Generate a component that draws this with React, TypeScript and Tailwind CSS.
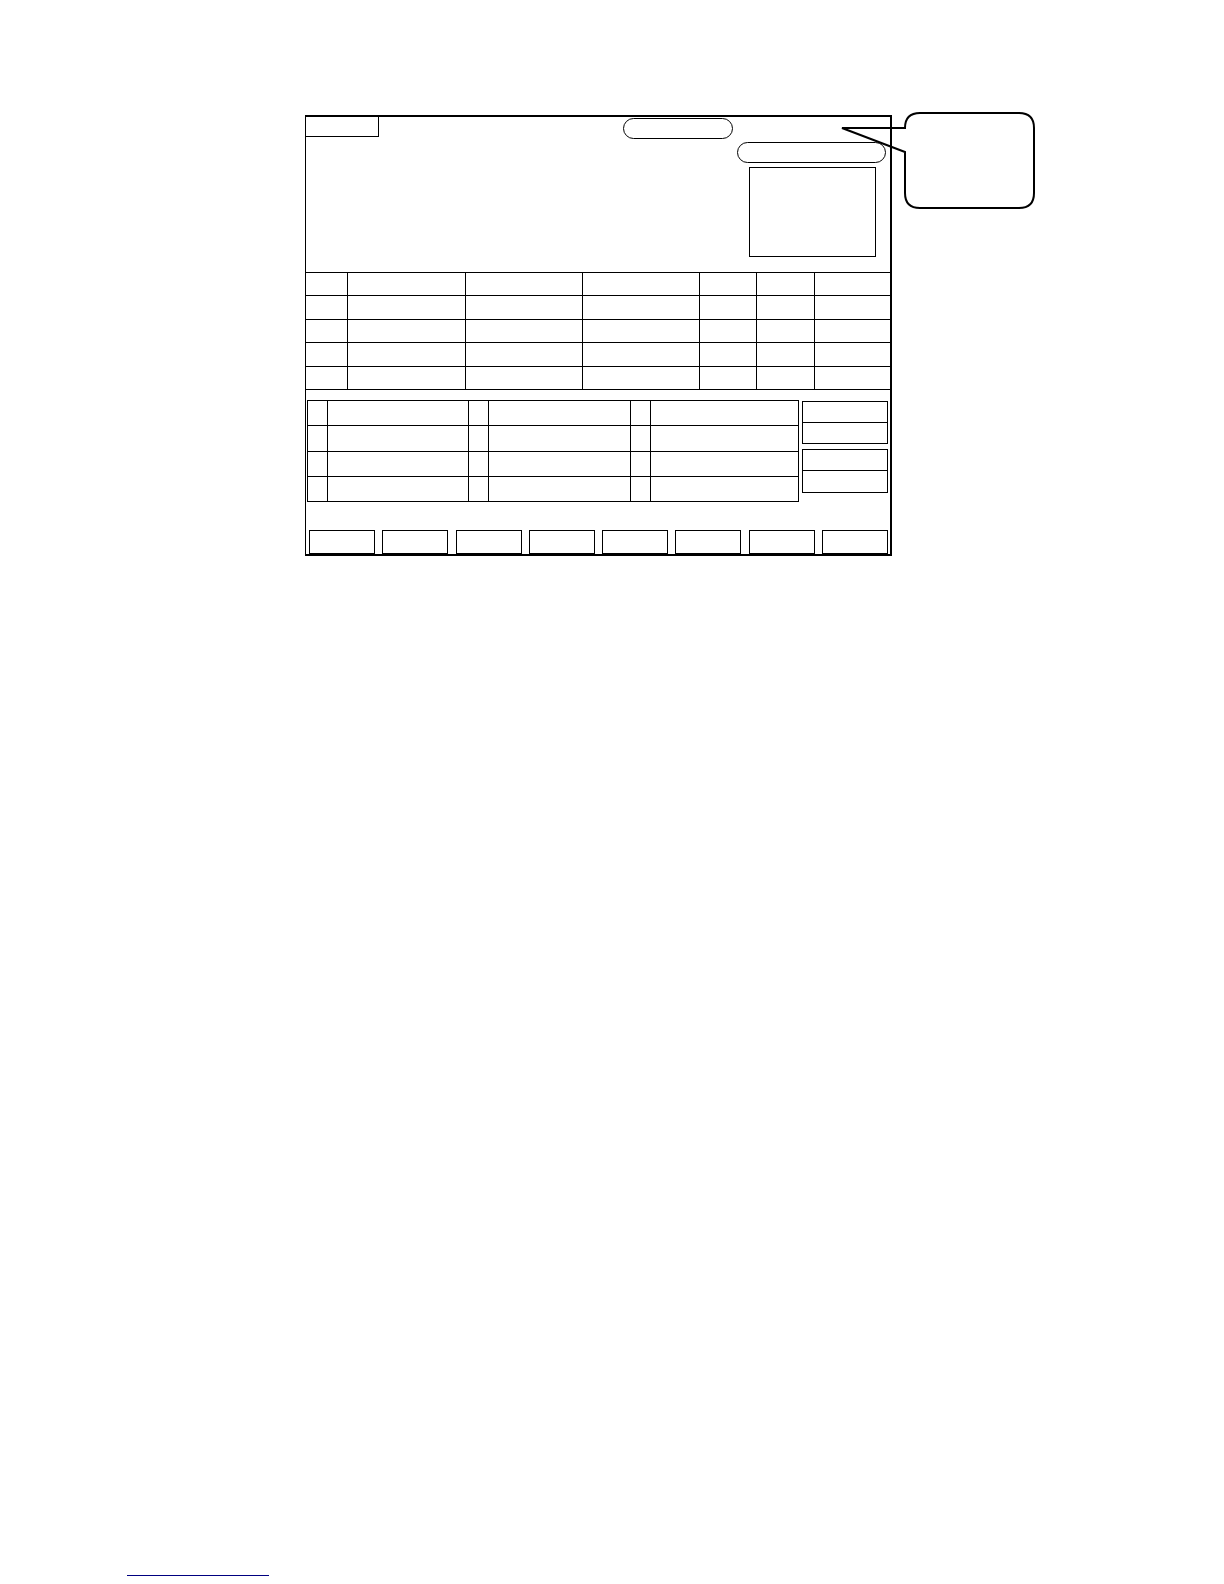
export default function App() {
  const tableCols = ['w-[41px]', 'w-[118px] border-l', 'w-[117px] border-l', 'w-[117px] border-l', 'w-[57px] border-l', 'w-[58px] border-l', 'flex-1 border-l']
  const tableRows = ['h-[23px]', 'h-[24px]', 'h-[23px]', 'h-[24px]', 'h-[23px]']
  const gridRows = ['h-[24px]', 'h-[26px] border-t', 'h-[25px] border-t', 'h-[25px] border-t']
  const gridCols = ['w-[19px]', 'w-[141px] border-l', 'w-[20px] border-l', 'w-[142px] border-l', 'w-[20px] border-l', 'flex-1 border-l']

  return (
    <div className="relative min-h-screen bg-white pt-[115px] font-['Liberation_Sans',sans-serif]">
      {/* screen frame */}
      <div className="ml-[305px] flex h-[441px] w-[587px] flex-col border-t-2 border-r-2 border-b-2 border-l border-black">
        {/* header area */}
        <div className="flex h-[155px] items-start">
          <div className="h-[20px] w-[73px] border-r border-b border-black" />
          <div className="ml-[244px] mt-[1px] h-[21px] w-[110px] rounded-full border border-black" />
          <div className="ml-[4px] mt-[25px] flex flex-col">
            <div className="h-[21px] w-[149px] rounded-full border border-black" />
            <div className="ml-[12px] mt-[4px] h-[90px] w-[127px] border border-black" />
          </div>
        </div>

        {/* list table */}
        <div className="border-t border-black">
          {tableRows.map((h, r) => (
            <div key={r} className={`flex border-b border-black ${h}`}>
              {tableCols.map((c, i) => (
                <div key={i} className={`${c} border-black`} />
              ))}
            </div>
          ))}
        </div>

        {/* lower panel */}
        <div className="flex flex-1 flex-col">
          <div className="ml-[1px] mt-[10px] flex items-start">
            <div className="w-[492px] border border-black">
              {gridRows.map((h, r) => (
                <div key={r} className={`flex border-black ${h}`}>
                  {gridCols.map((c, i) => (
                    <div key={i} className={`${c} border-black`} />
                  ))}
                </div>
              ))}
            </div>
            <div className="ml-[3px] mt-[1px] flex w-[86px] flex-col gap-[5px]">
              <div className="flex h-[43px] flex-col border border-black">
                <div className="h-[20px]" />
                <div className="flex-1 border-t border-black" />
              </div>
              <div className="flex h-[44px] flex-col border border-black">
                <div className="h-[20px]" />
                <div className="flex-1 border-t border-black" />
              </div>
            </div>
          </div>

          <div className="mt-auto flex justify-between pl-[3px] pr-[2px]">
            {Array.from({ length: 8 }).map((_, i) => (
              <div key={i} className="h-[24px] w-[66px] border border-black" />
            ))}
          </div>
        </div>
      </div>

      {/* callout */}
      <svg
        className="absolute left-[836px] top-[108px]"
        width="204"
        height="104"
        viewBox="836 108 204 104"
        fill="none"
      >
        <path
          d="M842 128 L905 128 Q905 113 920 113 L1019 113 Q1034 113 1034 128 L1034 193 Q1034 208 1019 208 L920 208 Q905 208 905 193 L905 152 Z"
          stroke="black"
          strokeWidth="2"
          strokeLinejoin="miter"
        />
      </svg>

      {/* footnote rule */}
      <div className="ml-[127px] mt-[1019px] w-[142px] border-t border-[#000080]" />
    </div>
  )
}
